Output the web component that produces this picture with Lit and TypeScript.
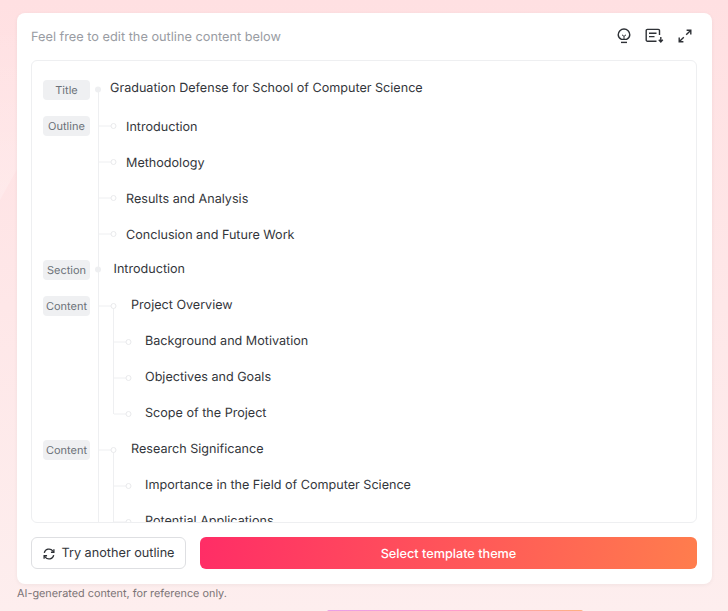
import { LitElement, html, css, svg } from "lit";
import { customElement } from "lit/decorators.js";

type Row = { tag?: string; text: string; kind: "title" | "section" | "l1" | "l2" | "l3"; last?: boolean };

const ROWS: Row[] = [
  { tag: "Title", text: "Graduation Defense for School of Computer Science", kind: "title" },
  { tag: "Outline", text: "Introduction", kind: "l1" },
  { text: "Methodology", kind: "l1" },
  { text: "Results and Analysis", kind: "l1" },
  { text: "Conclusion and Future Work", kind: "l1" },
  { tag: "Section", text: "Introduction", kind: "section" },
  { tag: "Content", text: "Project Overview", kind: "l2" },
  { text: "Background and Motivation", kind: "l3" },
  { text: "Objectives and Goals", kind: "l3" },
  { text: "Scope of the Project", kind: "l3", last: true },
  { tag: "Content", text: "Research Significance", kind: "l2" },
  { text: "Importance in the Field of Computer Science", kind: "l3" },
  { text: "Potential Applications", kind: "l3" },
];

const LINE = "#eeeff1";

function guide(r: Row, first: boolean) {
  const { kind, last } = r;
  const c = 18;
  const parts = [];
  parts.push(svg`<line x1="7.5" y1=${first ? c : 0} x2="7.5" y2="36" stroke=${LINE} />`);
  if (kind === "title" || kind === "section") {
    parts.push(svg`<circle cx="7" cy=${c - 0.5} r="3" fill=${LINE} />`);
  }
  if (kind === "l1" || kind === "l2") {
    parts.push(svg`<line x1="8" y1=${c} x2="20" y2=${c} stroke=${LINE} />`);
    if (kind === "l2") {
      parts.push(svg`<line x1="22.5" y1=${c} x2="22.5" y2="36" stroke=${LINE} />`);
    }
    parts.push(svg`<circle cx="22.5" cy=${c} r="2.5" fill="#fff" stroke="#e9eaec" />`);
  }
  if (kind === "l3") {
    parts.push(svg`<line x1="22.5" y1="0" x2="22.5" y2=${last ? c : 36} stroke=${LINE} />`);
    parts.push(svg`<line x1="23" y1=${c} x2="35" y2=${c} stroke=${LINE} />`);
    parts.push(svg`<circle cx="37.5" cy=${c} r="2.5" fill="#fff" stroke="#e9eaec" />`);
  }
  return html`<svg class="guide" height="36">${parts}</svg>`;
}

@customElement("app-root")
export class AppRoot extends LitElement {
  static styles = css`
    :host {
      display: block;
      position: relative;
      width: 728px;
      height: 611px;
      overflow: hidden;
      font-family: Inter, "Liberation Sans", sans-serif;
      text-rendering: geometricPrecision;
      background: linear-gradient(180deg, #ffe0e2 0%, #fee7e8 50%, #fdeeee 100%);
    }
    .page {
      box-sizing: border-box;
      height: 611px;
      padding: 13px 16px 0 17px;
      display: flex;
      flex-direction: column;
    }
    .shape {
      position: absolute;
      left: 0;
      top: 0;
    }
    .card {
      position: relative;
      box-sizing: border-box;
      height: 571px;
      background: #fff;
      border-radius: 8px;
      box-shadow: 0 1px 4px rgba(0, 0, 0, 0.05);
      padding: 0 15px 15px 14px;
      display: flex;
      flex-direction: column;
    }
    .head {
      box-sizing: border-box;
      height: 47px;
      padding-bottom: 2px;
      display: flex;
      align-items: center;
      justify-content: space-between;
      flex: none;
    }
    .head-text {
      font-size: 12.75px;
      line-height: 16px;
      padding-top: 4px;
      color: #999ca3;
    }
    .icons {
      display: flex;
      align-items: center;
      gap: 13px;
      margin-right: 5px;
    }
    .icons svg {
      display: block;
    }
    .icons .bulb {
      margin-top: 2px;
    }
    .box {
      flex: none;
      box-sizing: border-box;
      height: 463px;
      border: 1px solid #eeeff1;
      border-radius: 6px;
      overflow: hidden;
      padding: 11px 0 0 11px;
    }
    .row {
      display: flex;
      align-items: flex-start;
      height: 36px;
    }
    .tag-cell {
      width: 47px;
      height: 36px;
      flex: none;
      display: flex;
      align-items: center;
    }
    .tag {
      width: 47px;
      height: 20px;
      background: #eff0f2;
      border-radius: 4px;
      font-size: 11px;
      color: #6b7078;
      display: flex;
      align-items: center;
      justify-content: center;
    }
    .guide {
      display: block;
      flex: none;
      margin-left: 1px;
    }
    .txt {
      font-size: 12.6px;
      line-height: 36px;
      color: #33363b;
      white-space: nowrap;
      transform: translateY(2px);
    }
    .title .guide {
      width: 19px;
    }
    .title .txt {
      transform: translateY(-1px);
    }
    .section .guide {
      width: 22.5px;
    }
    .section .txt,
    .l2 .txt,
    .l3 .txt {
      transform: translateY(0);
    }
    .l1 .guide {
      width: 35px;
    }
    .l2 .guide {
      width: 40px;
    }
    .l3 .guide {
      width: 54px;
    }
    .actions {
      flex: none;
      margin-top: 14px;
      display: flex;
      gap: 14px;
      height: 32px;
    }
    .btn {
      box-sizing: border-box;
      height: 32px;
      border-radius: 6px;
      font-family: inherit;
      font-size: 12.7px;
      line-height: 16px;
      text-rendering: geometricPrecision;
      display: flex;
      align-items: center;
      justify-content: center;
      cursor: pointer;
    }
    .ghost {
      width: 155px;
      flex: none;
      background: #fff;
      border: 1px solid #dedfe2;
      color: #33363b;
      gap: 6px;
      padding: 1px 0 0 1px;
    }
    .primary {
      flex: 1;
      border: none;
      color: #fff;
      font-weight: 500;
      background: linear-gradient(97deg, #ff2d66 0%, #ff7d4d 100%);
      padding: 3px 0 0;
    }
    .foot {
      font-size: 10.85px;
      color: #7b7476;
      line-height: 18px;
    }
    .strip {
      position: absolute;
      left: 327px;
      top: 610px;
      width: 256px;
      height: 2px;
      border-radius: 2px 2px 0 0;
      background: linear-gradient(90deg, #e8a0e8, #ff9ccc 50%, #ffb080);
    }
  `;

  render() {
    return html`
      <svg class="shape" width="728" height="611" viewBox="0 0 728 611">
        <defs>
          <linearGradient id="glow" x1="0" y1="0" x2="0" y2="1">
            <stop offset="0.1" stop-color="#fff" stop-opacity="0" />
            <stop offset="1" stop-color="#fff" stop-opacity="0.2" />
          </linearGradient>
        </defs>
        <path d="M0 0H110L0 200Z" fill="url(#glow)" />
      </svg>
      <div class="page">
        <div class="card">
          <div class="head">
            <span class="head-text">Feel free to edit the outline content below</span>
            <div class="icons">
              <svg class="bulb" width="16" height="17" viewBox="0 0 16 17" fill="none" stroke="#2e3136" stroke-width="1.4">
                <path d="M5.4 11.4C3.6 10.4 2.2 8.9 2.2 6.8A5.8 5.8 0 0 1 13.8 6.8C13.8 8.9 12.4 10.4 10.6 11.4Z" />
                <path d="M6 6.8L8 8.4L10 6.8M8 8.4V11.4" stroke-width="1" />
                <path d="M5 14.4H11" />
              </svg>
              <svg width="20" height="16" viewBox="0 0 20 16" fill="none" stroke="#2e3136" stroke-width="1.4">
                <path d="M14.5 7V2.6A1.2 1.2 0 0 0 13.3 1.4H2.4A1.2 1.2 0 0 0 1.2 2.6V12A1.2 1.2 0 0 0 2.4 13.2H11.5" />
                <path d="M4 5.2H11.5M4 8.6H9.5" />
                <path d="M15.8 9V13.5M13.8 11.8L15.8 14L17.8 11.8" />
              </svg>
              <svg width="14" height="14" viewBox="0 0 14 14" fill="none" stroke="#2e3136" stroke-width="1.4">
                <path d="M8.2 5.8L12.6 1.4M8.6 1.2H12.8V5.4" />
                <path d="M5.8 8.2L1.4 12.6M1.2 8.6V12.8H5.4" />
              </svg>
            </div>
          </div>
          <div class="box">
            ${ROWS.map(
              (r, i) => html`
                <div class="row ${r.kind}">
                  <div class="tag-cell">${r.tag ? html`<span class="tag">${r.tag}</span>` : ""}</div>
                  ${guide(r, i === 0)}
                  <span class="txt">${r.text}</span>
                </div>
              `
            )}
          </div>
          <div class="actions">
            <button class="btn ghost">
              <svg width="12" height="12" viewBox="0 0 13 13" fill="none" stroke="#2e3136" stroke-width="1.4">
                <path d="M1.4 5.4A5.2 5.2 0 0 1 10.6 3.2L11.6 4.4M11.6 7.6A5.2 5.2 0 0 1 2.4 9.8L1.4 8.6" />
                <path d="M11.8 1.4V4.6H8.6M1.2 11.6V8.4H4.4" />
              </svg>
              Try another outline
            </button>
            <button class="btn primary">Select template theme</button>
          </div>
        </div>
        <div class="foot">AI-generated content, for reference only.</div>
      </div>
      <div class="strip"></div>
    `;
  }
}
